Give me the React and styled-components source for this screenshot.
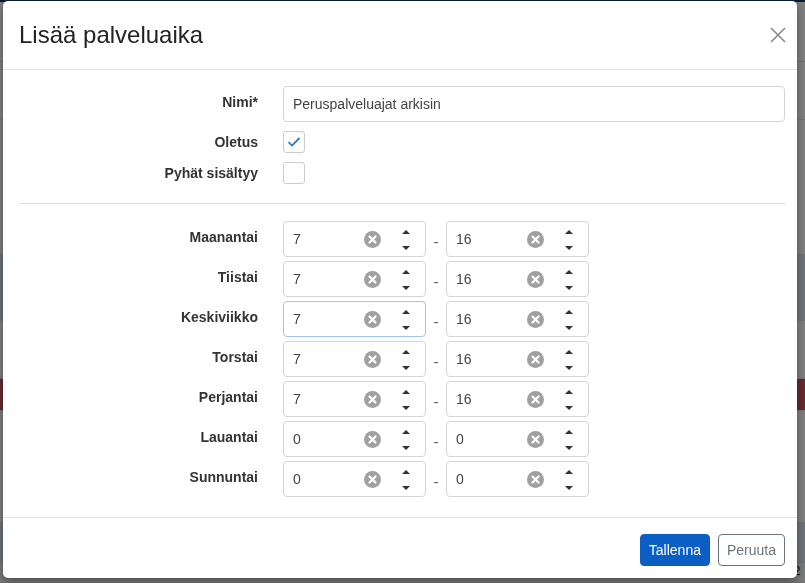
import React from "react";
import styled, { createGlobalStyle } from "styled-components";

const Global = createGlobalStyle`
  html, body { margin: 0; padding: 0; }
  body {
    font-family: "Liberation Sans", Arial, sans-serif;
    font-size: 14px;
    color: #333;
    background: #fff;
    overflow: hidden;
  }
  * { box-sizing: border-box; }
`;

/* ---------- background page (seen behind the overlay) ---------- */
const Page = styled.div`
  width: 805px;
  height: 583px;
  display: flex;
  flex-direction: column;
  background: #fff;
`;
const NavBar = styled.div`
  height: 2px;
  background: #163d70;
`;
const PageBlock = styled.div`
  height: ${(p) => p.$h}px;
  flex: none;
  background: ${(p) => p.$bg || "#fff"};
  border-bottom: 1px solid #e4e4e4;
  font-size: 13px;
  color: #222;
  padding: 0 0 0 4px;
  overflow: hidden;
  white-space: nowrap;
  display: flex;
  align-items: ${(p) => (p.$top ? "flex-start" : "flex-end")};
`;
const Overlay = styled.div`
  position: fixed;
  inset: 0;
  background: rgba(0, 0, 0, 0.5);
`;

/* ---------- modal ---------- */
const Modal = styled.div`
  position: fixed;
  left: 3px;
  top: 1px;
  width: 794px;
  background: #fff;
  border-radius: 5px;
  box-shadow: 0 3px 9px rgba(0, 0, 0, 0.4);
  display: flex;
  flex-direction: column;
`;
const Header = styled.div`
  height: 69px;
  border-bottom: 1px solid #e5e5e5;
  display: flex;
  align-items: center;
  justify-content: space-between;
  padding: 0 11px 0 16px;
`;
const Title = styled.h4`
  margin: 0;
  font-family: "Liberation Sans", Arial, sans-serif;
  font-weight: normal;
  font-size: 24px;
  color: #222;
  line-height: 1;
`;
const CloseButton = styled.button`
  width: 16px;
  height: 16px;
  padding: 0;
  border: 0;
  background: none;
  display: flex;
  cursor: pointer;
`;
const Body = styled.div`
  padding: 16px 12px 20px 16px;
  display: flex;
  flex-direction: column;
`;
const FormGrid = styled.div`
  display: grid;
  grid-template-columns: 239px 1fr;
  column-gap: 25px;
  row-gap: ${(p) => p.$gap}px;
`;
const Label = styled.label`
  text-align: right;
  font-weight: bold;
  color: #333;
  font-size: 14px;
  line-height: 20px;
  padding-top: ${(p) => (p.$check ? 0 : 6)}px;
  align-self: ${(p) => (p.$check ? "center" : "start")};
`;
const TextInput = styled.div`
  height: 36px;
  border: 1px solid #d5d5d5;
  border-radius: 4px;
  padding: 0 9px;
  display: flex;
  align-items: center;
  color: #444;
  font-size: 14px;
`;
const CheckBox = styled.div`
  width: 22px;
  height: 22px;
  border: 1px solid #ccc;
  border-radius: 3px;
  display: flex;
  align-items: center;
  justify-content: center;
`;
const Separator = styled.hr`
  margin: 19px 0 17px;
  border: 0;
  border-top: 1px solid #ddd;
  height: 0;
`;
const TimeRange = styled.div`
  display: flex;
  align-items: center;
`;
const Dash = styled.span`
  width: 20px;
  text-align: center;
  color: #555;
  font-size: 14px;
  padding-top: 5px;
`;
const NumberBox = styled.div`
  width: 143px;
  height: 36px;
  border: 1px solid ${(p) => (p.$focus ? "#9dc6ea" : "#d5d5d5")};
  border-radius: 4px;
  display: flex;
  align-items: center;
  padding: 0 15px 0 9px;
  color: #444;
  font-size: 14px;
`;
const Value = styled.span`
  flex: 1;
`;
const ClearIcon = styled.svg`
  width: 17px;
  height: 17px;
  flex: none;
`;
const Spinner = styled.div`
  margin-left: 21px;
  width: 8px;
  display: flex;
  flex-direction: column;
  gap: 12px;
  padding-top: 1px;
`;
const Arrow = styled.svg`
  width: 8px;
  height: 4px;
  display: block;
`;
const Footer = styled.div`
  border-top: 1px solid #e5e5e5;
  padding: 16px 12px 12px;
  display: flex;
  justify-content: flex-end;
  gap: 8px;
`;
const Button = styled.button`
  height: 32px;
  padding: 0 8px;
  font-family: "Liberation Sans", Arial, sans-serif;
  font-size: 14px;
  border-radius: 4px;
  border: 1px solid ${(p) => (p.$primary ? "#0b5fc4" : "#6c757d")};
  background: ${(p) => (p.$primary ? "#0b5fc4" : "#fff")};
  color: ${(p) => (p.$primary ? "#fff" : "#6c757d")};
  cursor: pointer;
`;

const Clear = () => (
  <ClearIcon viewBox="0 0 16 16">
    <circle cx="8" cy="8" r="8" fill="#a0a0a0" />
    <path d="M5.2 5.2 L10.8 10.8 M10.8 5.2 L5.2 10.8" stroke="#fff" strokeWidth="2.2" strokeLinecap="round" />
  </ClearIcon>
);

const NumberInput = ({ value, focus }) => (
  <NumberBox $focus={focus}>
    <Value>{value}</Value>
    <Clear />
    <Spinner>
      <Arrow viewBox="0 0 8 4">
        <path d="M0 4 L4 0 L8 4 Z" fill="#333" />
      </Arrow>
      <Arrow viewBox="0 0 8 4">
        <path d="M0 0 L8 0 L4 4 Z" fill="#333" />
      </Arrow>
    </Spinner>
  </NumberBox>
);

const days = [
  ["Maanantai", "7", "16"],
  ["Tiistai", "7", "16"],
  ["Keskiviikko", "7", "16", true],
  ["Torstai", "7", "16"],
  ["Perjantai", "7", "16"],
  ["Lauantai", "0", "0"],
  ["Sunnuntai", "0", "0"],
];

export default function App() {
  return (
    <>
      <Global />
      <Page>
        <NavBar />
        <PageBlock $h={60}>&nbsp;</PageBlock>
        <PageBlock $h={58}>a</PageBlock>
        <PageBlock $h={135}>&nbsp;</PageBlock>
        <PageBlock $h={66} $bg="#dce9f5">&nbsp;</PageBlock>
        <PageBlock $h={58}>&nbsp;</PageBlock>
        <PageBlock $h={32} $bg="#c9565f">&nbsp;</PageBlock>
        <PageBlock $h={112}>&nbsp;</PageBlock>
        <PageBlock $h={40} $bg="#dce9f5">a</PageBlock>
        <PageBlock $h={20} $top $bg="#f4f4f4">
          &nbsp;alkaen ma 8-12 ELTO 8-12 ELTO 8-12 ELTO 8-12 ELTO ma 8-12 ELTO 8-12 ELTO 8-12 ELTO 8-12 ELTO 8-12 ELTO 8-12 ELTO ma 8-12
        </PageBlock>
      </Page>
      <Overlay />
      <Modal role="dialog">
        <Header>
          <Title>Lisää palveluaika</Title>
          <CloseButton aria-label="Sulje">
            <svg width="16" height="16" viewBox="0 0 16 16">
              <path d="M1 1 L15 15 M15 1 L1 15" stroke="#8a8a8a" strokeWidth="1.6" />
            </svg>
          </CloseButton>
        </Header>
        <Body>
          <FormGrid $gap={9}>
            <Label>Nimi*</Label>
            <TextInput>Peruspalveluajat arkisin</TextInput>
            <Label $check>Oletus</Label>
            <CheckBox>
              <svg width="14" height="12" viewBox="0 0 14 12">
                <path d="M1.5 6.2 L5 9.6 L12.5 2" stroke="#2c7bcb" strokeWidth="1.8" fill="none" />
              </svg>
            </CheckBox>
            <Label $check>Pyhät sisältyy</Label>
            <CheckBox />
          </FormGrid>
          <Separator />
          <FormGrid $gap={4}>
            {days.map(([day, from, to, focus]) => (
              <React.Fragment key={day}>
                <Label>{day}</Label>
                <TimeRange>
                  <NumberInput value={from} focus={focus} />
                  <Dash>-</Dash>
                  <NumberInput value={to} />
                </TimeRange>
              </React.Fragment>
            ))}
          </FormGrid>
        </Body>
        <Footer>
          <Button $primary>Tallenna</Button>
          <Button>Peruuta</Button>
        </Footer>
      </Modal>
    </>
  );
}
